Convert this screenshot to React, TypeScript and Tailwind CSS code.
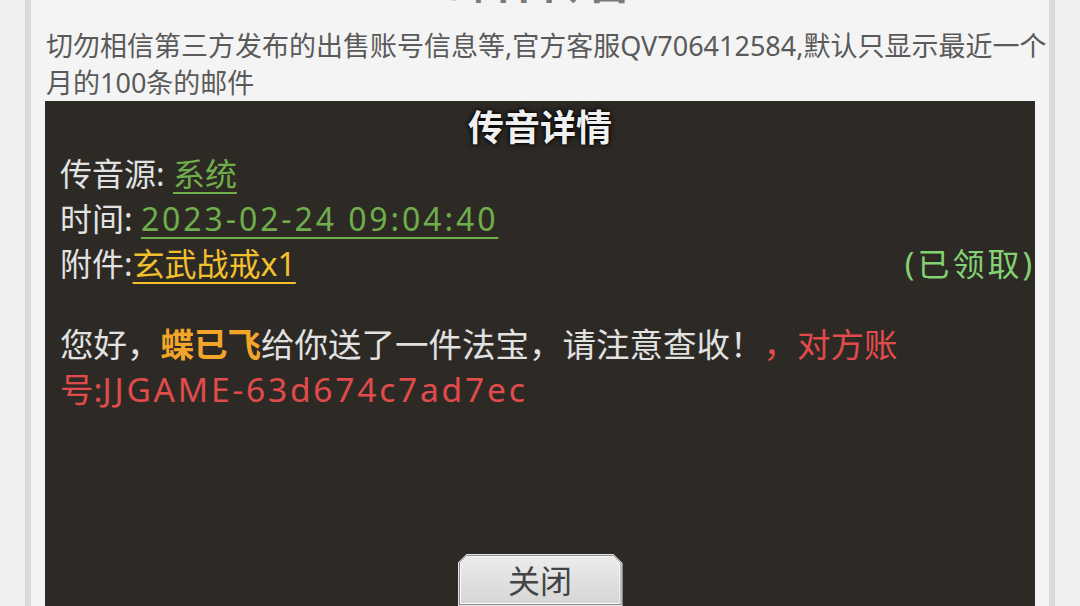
export default function App() {
  return (
    <div className="w-[1080px] h-[606px] overflow-hidden bg-[#efefef] pl-[25px] font-['Noto_Sans','Noto_Sans_CJK_SC',sans-serif]">
      <div className="w-[1030px] h-full border-x-[6px] border-[#d9d9d9] bg-[#f4f4f4] px-[14px] flex flex-col">
        <div className="-mt-[46px] h-[73px] text-center text-[46px] leading-[52px] font-bold text-[#7a7a7a]">
          邮件传音
        </div>
        <div className="pl-[1px] text-[27px] leading-[37px] text-[#5a5a5a] whitespace-nowrap">
          <div>切勿相信第三方发布的出售账号信息等,官方客服QV706412584,默认只显示最近一个</div>
          <div>月的100条的邮件</div>
        </div>
        <div className="flex-1 bg-[#2d2a26] flex flex-col">
          <div className="pt-[4px] h-[50px] text-center text-[36px] leading-[46px] font-bold text-[#f0f0f0] [text-shadow:0_0_6px_#000,0_0_3px_#000]">
            传音详情
          </div>
          <div className="pl-[15px] text-[32px] leading-[45px] text-[#e2e2e2]">
            <div>
              传音源: <span className="text-[#6fae4a] underline underline-offset-[6px] decoration-[2px]">系统</span>
            </div>
            <div>
              时间: <span className="text-[#6fae4a] tracking-[2.9px] underline underline-offset-[6px] decoration-[2px]">2023-02-24 09:04:40</span>
            </div>
            <div className="flex justify-between">
              <span>
                附件:<span className="text-[#f3c02c] underline underline-offset-[6px] decoration-[2px]">玄武战戒x1</span>
              </span>
              <span className="text-[#84d174] tracking-[3px]">(已领取)</span>
            </div>
          </div>
          <div className="mt-[36px] px-[15px] text-[33.5px] leading-[45px] text-[#e2e2e2] whitespace-nowrap">
            <div>
              您好，<span className="font-bold text-[#f3a52a]">蝶已飞</span>给你送了一件法宝，请注意查收！<span className="text-[#e14b4b]">，对方账</span>
            </div>
            <div className="text-[#e14b4b]">
              号:<span className="tracking-[2.8px]">JJGAME-63d674c7ad7ec</span>
            </div>
          </div>
          <div className="mt-auto flex justify-center">
            <div className="w-[165px] h-[52px] bg-[#e6e6e6] p-[1px] [clip-path:polygon(9px_0,calc(100%-9px)_0,100%_9px,100%_100%,0_100%,0_9px)]">
              <div className="h-full bg-[#8a8a8a] p-[1px] [clip-path:polygon(8px_0,calc(100%-8px)_0,100%_8px,100%_100%,0_100%,0_8px)]">
                <div className="h-full bg-[#fafafa] p-[1px] [clip-path:polygon(7px_0,calc(100%-7px)_0,100%_7px,100%_100%,0_100%,0_7px)]">
                  <div className="h-full bg-gradient-to-b from-[#ececec] to-[#d6d6d6] flex items-start justify-center pt-[4px] text-[32px] leading-[40px] text-[#444444] [clip-path:polygon(6px_0,calc(100%-6px)_0,100%_6px,100%_100%,0_100%,0_6px)]">
                    关闭
                  </div>
                </div>
              </div>
            </div>
          </div>
        </div>
      </div>
    </div>
  );
}
